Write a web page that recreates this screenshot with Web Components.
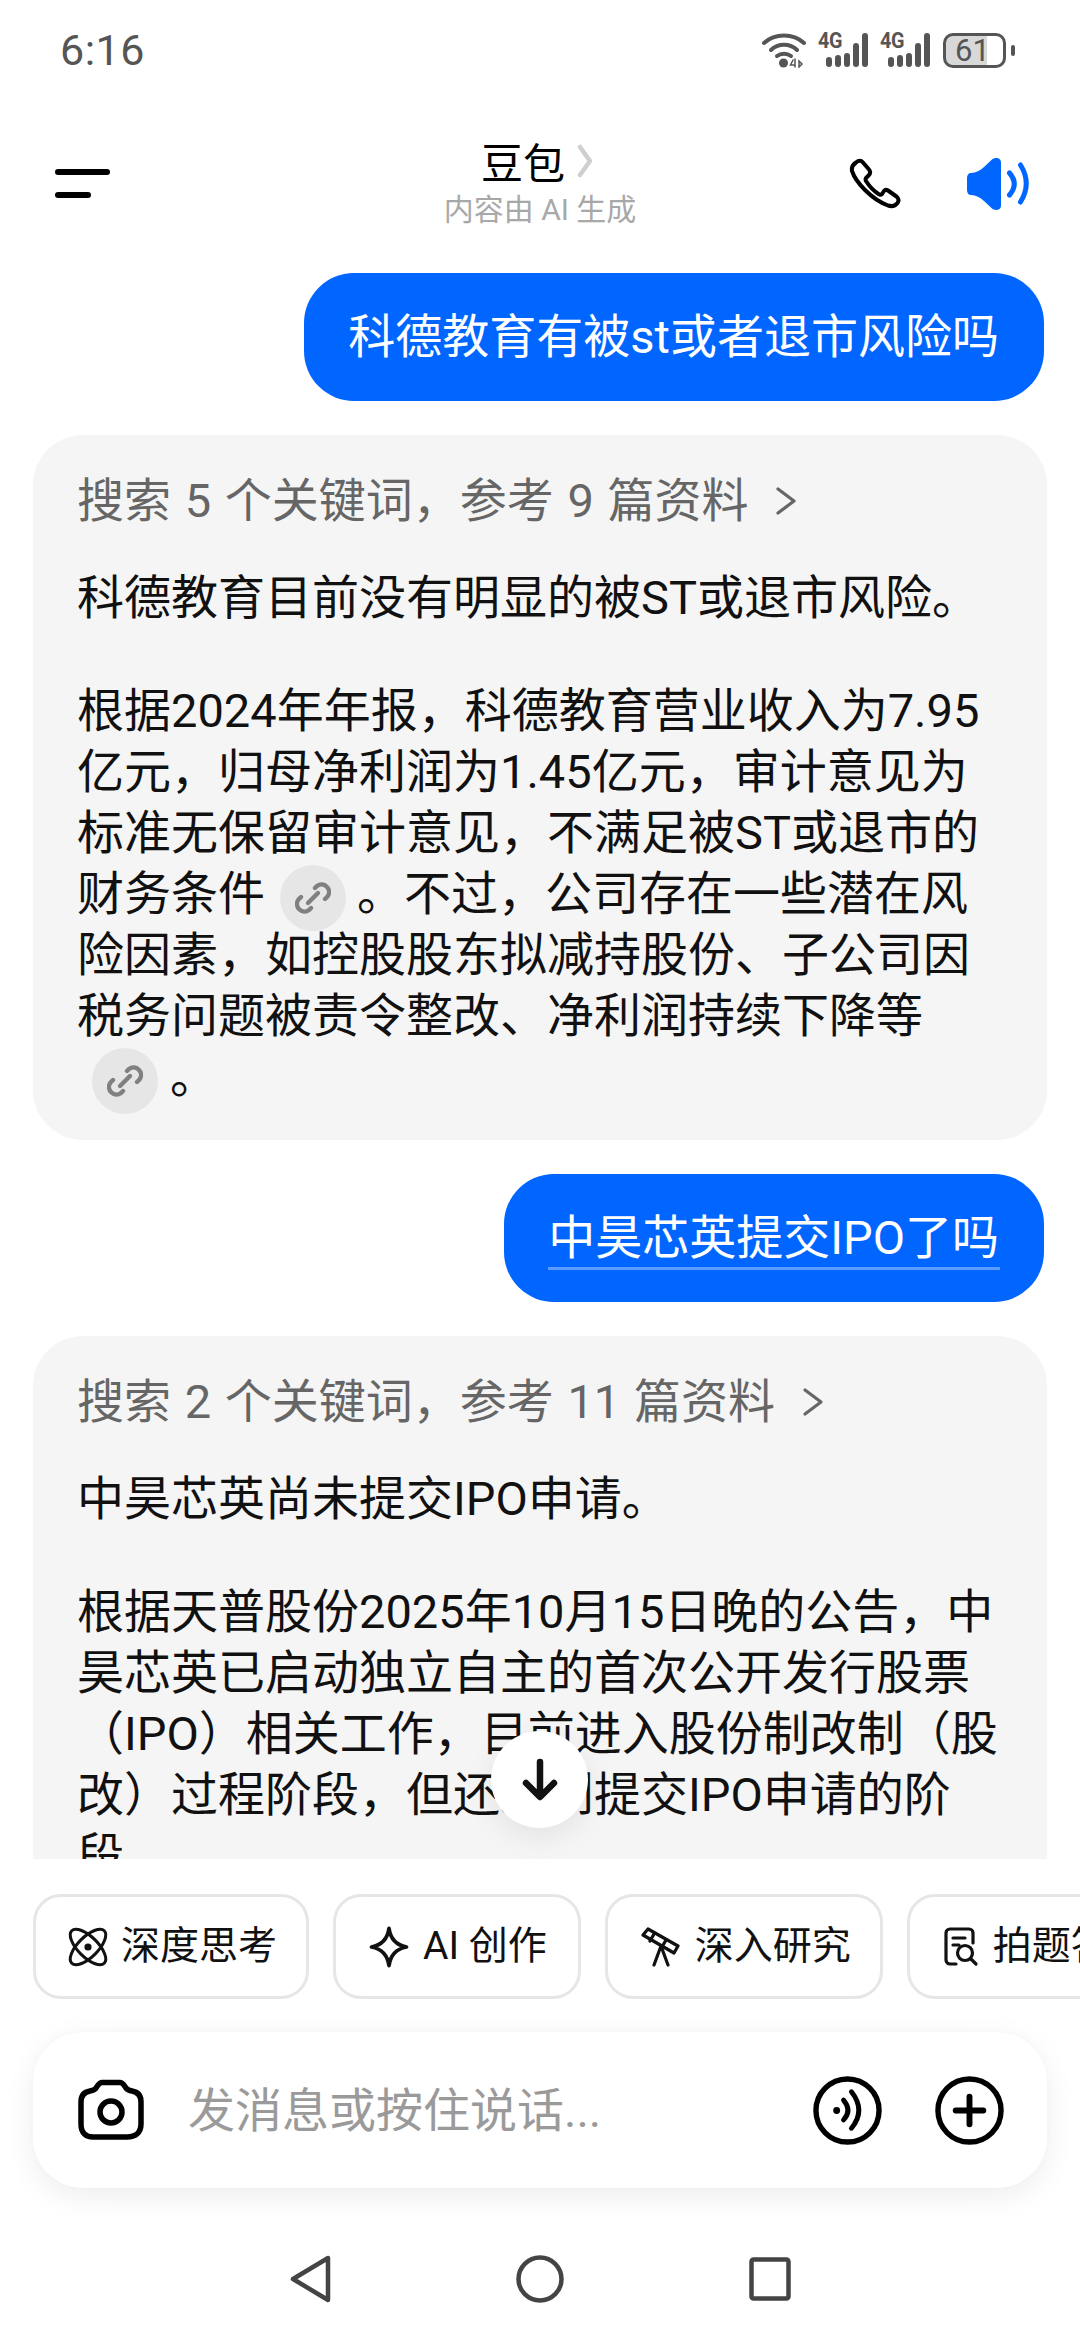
<!DOCTYPE html>
<html lang="zh-CN"><head><meta charset="utf-8"><title>豆包</title>
<style>
html,body{margin:0;padding:0;background:#fff}
body{width:1080px;height:2340px;overflow:hidden;font-family:"Roboto","Noto Sans CJK SC",sans-serif;color:#111}
</style></head><body>
<doubao-app>
  <status-bar slot="status"></status-bar>
  <app-header slot="header"></app-header>
  <chat-view slot="chat">
    <user-bubble>科德教育有被st或者退市风险吗</user-bubble>
    <answer-card head="搜索 5 个关键词，参考 9 篇资料">
      <ans-line>科德教育目前没有明显的被ST或退市风险。</ans-line>
      <ans-gap></ans-gap>
      <ans-line>根据2024年年报，科德教育营业收入为7.95</ans-line>
      <ans-line>亿元，归母净利润为1.45亿元，审计意见为</ans-line>
      <ans-line>标准无保留审计意见，不满足被ST或退市的</ans-line>
      <ans-line>财务条件<cite-chip></cite-chip>。不过，公司存在一些潜在风</ans-line>
      <ans-line>险因素，如控股股东拟减持股份、子公司因</ans-line>
      <ans-line>税务问题被责令整改、净利润持续下降等</ans-line>
      <ans-line><cite-chip class="first"></cite-chip>。</ans-line>
    </answer-card>
    <user-bubble underline>中昊芯英提交IPO了吗</user-bubble>
    <answer-card head="搜索 2 个关键词，参考 11 篇资料">
      <ans-line>中昊芯英尚未提交IPO申请。</ans-line>
      <ans-gap></ans-gap>
      <ans-line>根据天普股份2025年10月15日晚的公告，中</ans-line>
      <ans-line>昊芯英已启动独立自主的首次公开发行股票</ans-line>
      <ans-line>（IPO）相关工作，目前进入股份制改制（股</ans-line>
      <ans-line>改）过程阶段，但还未到提交IPO申请的阶</ans-line>
      <ans-line>段。</ans-line>
    </answer-card>
    <scroll-down slot="over"></scroll-down>
  </chat-view>
  <chip-bar slot="chips">
    <tool-chip label="深度思考"><svg slot="icon" width="38" height="38" viewBox="0 0 38 38" fill="none" stroke="#111" stroke-width="3" overflow="visible"><ellipse cx="19" cy="19" rx="23" ry="10" transform="rotate(45 19 19)"/><ellipse cx="19" cy="19" rx="23" ry="10" transform="rotate(-45 19 19)"/><circle cx="19" cy="19" r="3.6" fill="#111" stroke="none"/></svg></tool-chip>
    <tool-chip wide label="AI 创作"><svg slot="icon" width="40" height="42" viewBox="0 0 40 42" fill="none" stroke="#111" stroke-width="3.8" stroke-linejoin="round"><path d="M20 2.5C21.5 13 27 19 37.5 21 27 23 21.5 29 20 39.5 18.5 29 13 23 2.5 21 13 19 18.5 13 20 2.5Z"/></svg></tool-chip>
    <tool-chip label="深入研究"><svg slot="icon" width="40" height="40" viewBox="0 0 40 40" fill="none" stroke="#111" stroke-width="3.2" stroke-linejoin="round" stroke-linecap="round"><path d="M2 8 7 2 37 19 33 26Z"/><path d="M13 7 9 14M25 13 21 20M20 19 13 38M20 19 27 38"/></svg></tool-chip>
    <tool-chip label="拍题答疑"><svg slot="icon" width="36" height="40" viewBox="0 0 36 40" fill="none" stroke="#111" stroke-width="3.2" stroke-linecap="round" stroke-linejoin="round"><path d="M13 37H7a4 4 0 0 1-4-4V6a4 4 0 0 1 4-4h19a4 4 0 0 1 4 4v10"/><path d="M10 11h12M10 18h6"/><circle cx="22" cy="26" r="7.5"/><path d="M28 32l5 5"/></svg></tool-chip>
  </chip-bar>
  <composer-bar slot="composer">发消息或按住说话...</composer-bar>
  <nav-bar slot="nav"></nav-bar>
</doubao-app>
<script>
const def=(name,css,html,extra)=>{
  const tpl=document.createElement('template');
  tpl.innerHTML=`<style>${css}</style>${html}`;
  customElements.define(name,class extends HTMLElement{
    constructor(){super();this.attachShadow({mode:'open'}).appendChild(tpl.content.cloneNode(true));}
    connectedCallback(){extra&&extra(this)}
  });
};
const sig=`<div class="g"><b>4G</b><svg width="50" height="34" viewBox="0 0 50 34" fill="#555"><rect x="8" y="24" width="6" height="10" rx="3"/><rect x="17" y="22" width="6" height="12" rx="3"/><rect x="26" y="20" width="6" height="14" rx="3"/><rect x="35" y="10" width="6" height="24" rx="3"/><rect x="44" y="0" width="6" height="34" rx="3"/></svg></div>`;
def('doubao-app',`:host{display:flex;flex-direction:column;width:1080px;height:2340px;overflow:hidden}`,
`<slot name="status"></slot><slot name="header"></slot><slot name="chat"></slot><slot name="chips"></slot><slot name="composer"></slot><slot name="nav"></slot>`);

def('status-bar',`:host{display:flex;align-items:center;justify-content:space-between;height:100px;box-sizing:border-box;padding:0 65px 0 60px;color:#555}
.t{font:400 43px/1 "Roboto",sans-serif;letter-spacing:.5px}
.r{display:flex;align-items:center;height:36px}
.g{position:relative;width:50px;height:34px;margin-left:12px}
.g b{position:absolute;left:0;top:-2px;font:700 22px/20px "Roboto",sans-serif;letter-spacing:-.5px;transform:scaleX(.9);transform-origin:left}
.g svg{position:absolute;left:0;top:0}
.bat{position:relative;width:63px;height:35px;box-sizing:border-box;border:3px solid #555;border-radius:10px;margin-left:13px;text-align:center;font:400 31px/29px "Roboto",sans-serif;background:linear-gradient(90deg,#d8d8d8 0 41px,#fff 41px)}
.bat span{position:relative;left:-2px}
.nub{width:4px;height:11px;background:#555;border-radius:2px;margin-left:5px}`,
`<div class="t">6:16</div><div class="r">
<svg width="44" height="36" viewBox="0 0 44 36" fill="none" stroke="#555" stroke-width="4" stroke-linecap="round"><path d="M2 11C13 1 31 1 42 11"/><path d="M9 18C16 11 28 11 35 18"/><path d="M15 24c4-3 10-3 14 0"/><circle cx="21.500" cy="31" r="4.500" fill="#555" stroke="none"/><path d="M31 28l-2.500 5h4M33 27v8M37 29v6l3-3z" stroke-width="1.500"/></svg>
${sig}${sig}
<div class="bat"><span>61</span></div><div class="nub"></div></div>`);

def('app-header',`:host{display:block;position:relative;height:173px;box-sizing:border-box}
.bar{display:grid;grid-template-columns:1fr auto 1fr;align-items:start;height:100%}
.menu{display:flex;flex-direction:column;gap:17px;padding:69px 0 0 55px}
.menu i{display:block;height:6px;border-radius:3px;background:#000;width:55px}.menu i+i{width:36px}
.mid{display:flex;flex-direction:column;align-items:center;padding-top:36px}
.ti{display:flex;align-items:center;font:400 42px/50px "Noto Sans CJK SC",sans-serif;color:#000;margin-left:-6px}
.ti svg{margin-left:12px}
.sub{font:400 30px/36px "Roboto","Noto Sans CJK SC",sans-serif;color:#a8a8a8;margin-top:6px}
.act{display:flex;justify-content:flex-end;gap:66px;padding:58px 51px 0 0;align-items:center}`,
`<div class="bar"><div class="menu"><i></i><i></i></div>
<div class="mid"><div class="ti"><span>豆包</span><svg width="16" height="34" viewBox="0 0 16 34" fill="none" stroke="#cfcfcf" stroke-width="4.500" stroke-linecap="round" stroke-linejoin="round"><path d="M3 3l10 14-10 14"/></svg></div><div class="sub">内容由 AI 生成</div></div>
<div class="act">
<svg width="52" height="52" viewBox="0 0 52 52" fill="none" stroke="#000" stroke-width="4" stroke-linejoin="round"><path d="M7 4.500Q11 1 14 4.500L20 11.500Q22.500 14.500 19.500 17.500L17.500 19.500Q16 21 17 23 22 31 29.500 36 31.500 37.500 33 36L35 33Q36.500 31 39 32.500L47.500 38.500Q51 41.500 48.500 45 45 49.500 39 47.500 27 43 16 32 6 22 3 13 2 8 7 4.500Z"/></svg>
<svg width="62" height="52" viewBox="0 0 62 52"><path d="M0 20c0-3 1.500-5 4-5 5-.5 9-2 13-6l8-7.500c3-2.500 9-2 9 3v43c0 5-6 5.500-9 3l-8-7.500c-4-4-8-5.500-13-6-2.500 0-4-2-4-5z" fill="#0066ff"/><path d="M42.500 15Q52 26 42.500 37M53.500 7Q65 25.500 53.500 44" fill="none" stroke="#0066ff" stroke-width="5" stroke-linecap="round"/></svg>
</div></div>`);

def('chat-view',`:host{display:block;position:relative;height:1586px;overflow:hidden}
.col{display:flex;flex-direction:column;gap:34px;padding:0 33px}`,
`<div class="col"><slot></slot></div><slot name="over"></slot>`);

def('user-bubble',`:host{display:block;align-self:flex-end;margin-right:3px;background:#0066ff;color:#fff;border-radius:50px;height:128px;box-sizing:border-box;padding:0 45px 0 44px;font:400 47px/128px "Roboto","Noto Sans CJK SC",sans-serif;white-space:nowrap;position:relative}
:host([underline])::after{content:"";position:absolute;left:44px;right:44px;top:93px;height:3px;background:#5c9bff}`,`<slot></slot>`);

def('answer-card',`:host{display:block;background:#f5f5f5;border-radius:50px;padding:35px 45px 33px 44px;color:#111;font:400 47px/61px "Roboto","Noto Sans CJK SC",sans-serif}
.h{display:flex;align-items:center;color:#666;height:61px;margin-bottom:36px;white-space:nowrap;word-spacing:2px}
.h svg{margin-left:27px}`,
`<div class="h"><span id="h"></span><svg width="22" height="32" viewBox="0 0 22 32" fill="none" stroke="#666" stroke-width="3.200" stroke-linecap="round" stroke-linejoin="round"><path d="M3 4l16 12L3 28"/></svg></div><slot></slot>`,
el=>{el.shadowRoot.getElementById('h').textContent=el.getAttribute('head')});

def('ans-line',`:host{display:block;height:61px;line-height:61px;white-space:nowrap}`,`<slot></slot>`);
def('ans-gap',`:host{display:block;height:52px}`,``);

def('cite-chip',`:host{display:inline-flex;align-items:center;justify-content:center;width:66px;height:66px;margin:-3px 11px -3px 15px;border-radius:50%;background:#e6e6e6;vertical-align:middle}
:host(.first){margin-right:12px}`,
`<svg width="36" height="36" viewBox="0 0 36 36" fill="none" stroke="#808080" stroke-width="4.400" stroke-linecap="round"><path d="M20 8l2-2a7.500 7.500 0 0 1 10.500 10.500l-2.500 2.500"/><path d="M16 28l-2 2A7.500 7.500 0 0 1 3.500 19.500L6 17"/><path d="M13 23l10-10"/></svg>`);

def('scroll-down',`:host{position:absolute;left:491px;top:1458px;width:97px;height:97px;border-radius:50%;background:#fff;box-shadow:0 8px 30px rgba(0,0,0,.08);display:flex;align-items:center;justify-content:center}`,
`<svg width="40" height="44" viewBox="0 0 40 44" fill="none" stroke="#111" stroke-width="6.500" stroke-linecap="round" stroke-linejoin="round"><path d="M20 4v34M6 25l14 14 14-14"/></svg>`);

def('chip-bar',`:host{display:flex;gap:24px;padding:35px 0 0 33px;height:173px;box-sizing:border-box;overflow:hidden;white-space:nowrap}`,`<slot></slot>`);
def('tool-chip',`:host{display:flex;flex:none;align-items:center;gap:14px;height:105px;box-sizing:border-box;padding:0 29px 0 33px;border:3px solid #e6e6e6;border-radius:28px;font:400 39px/1 "Roboto","Noto Sans CJK SC",sans-serif;color:#111}
:host([wide]){padding-right:31px}`,
`<slot name="icon"></slot><span id="l"></span>`,el=>{el.shadowRoot.getElementById('l').textContent=el.getAttribute('label')});

def('composer-bar',`:host{display:flex;align-items:center;margin:0 33px;height:156px;box-sizing:border-box;padding:0 43px 0 45px;border-radius:50px;background:#fff;box-shadow:0 8px 30px rgba(0,0,0,.07),0 0 6px rgba(0,0,0,.02);font:400 47px/1 "Roboto","Noto Sans CJK SC",sans-serif;color:#9a9a9a}
.ph{flex:1;margin-left:44px}
svg{flex:none;display:block}
.v{margin-right:53px}`,
`<svg width="66" height="62" viewBox="0 0 66 62" fill="none" stroke="#000" stroke-width="5.500" stroke-linejoin="round"><path d="M24 3.500h18c3 0 4 3 6 5.500 1.500 2 3 2.500 6 3 6 1 9 5 9 11v22c0 9-6 13-14 13H16C8 58.500 3 54 3 45V23c0-6 3-10 9-11 3-.5 5-1 6-3 2-2.500 3-5.500 6-5.500Z"/><circle cx="33" cy="33" r="11"/></svg>
<div class="ph"><slot></slot></div>
<svg class="v" width="69" height="69" viewBox="0 0 70 70" fill="none" stroke="#000" stroke-linecap="round"><circle cx="35" cy="35" r="32" stroke-width="5.500"/><circle cx="24" cy="35" r="3.500" fill="#000" stroke="none"/><path d="M31 24.500Q40 35 31 44.500M39 16Q54 35 39 53" stroke-width="5"/></svg>
<svg width="69" height="69" viewBox="0 0 70 70" fill="none" stroke="#000" stroke-linecap="round"><circle cx="35" cy="35" r="32" stroke-width="5.500"/><path d="M35 21v28M21 35h28" stroke-width="6"/></svg>`);

def('nav-bar',`:host{display:flex;justify-content:center;align-items:center;flex:1;min-height:0;padding-top:30px}
.w{display:grid;grid-template-columns:auto auto auto;column-gap:185px;align-items:center}
svg{display:block}`,
`<div class="w">
<svg width="42" height="48" viewBox="0 0 42 48" fill="none" stroke="#444" stroke-width="4.500" stroke-linejoin="round"><path d="M39 3v42L4 24Z"/></svg>
<svg width="48" height="48" viewBox="0 0 48 48" fill="none" stroke="#444" stroke-width="4.500"><circle cx="24" cy="24" r="21.500"/></svg>
<svg width="42" height="44" viewBox="0 0 42 44" fill="none" stroke="#444" stroke-width="4.500" stroke-linejoin="round"><rect x="2.500" y="2.500" width="37" height="39" rx="2"/></svg>
</div>`);
</script></body></html>
